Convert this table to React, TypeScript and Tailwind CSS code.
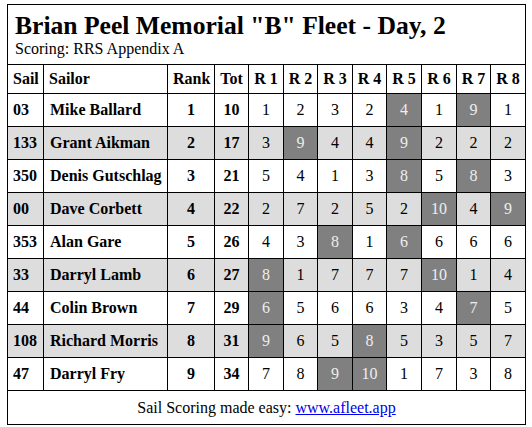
import React from "react";

type Row = {
  sail: string;
  sailor: string;
  rank: number;
  tot: number;
  races: number[];
  drops: number[];
};

const rows: Row[] = [
  { sail: "03", sailor: "Mike Ballard", rank: 1, tot: 10, races: [1, 2, 3, 2, 4, 1, 9, 1], drops: [4, 6] },
  { sail: "133", sailor: "Grant Aikman", rank: 2, tot: 17, races: [3, 9, 4, 4, 9, 2, 2, 2], drops: [1, 4] },
  { sail: "350", sailor: "Denis Gutschlag", rank: 3, tot: 21, races: [5, 4, 1, 3, 8, 5, 8, 3], drops: [4, 6] },
  { sail: "00", sailor: "Dave Corbett", rank: 4, tot: 22, races: [2, 7, 2, 5, 2, 10, 4, 9], drops: [5, 7] },
  { sail: "353", sailor: "Alan Gare", rank: 5, tot: 26, races: [4, 3, 8, 1, 6, 6, 6, 6], drops: [2, 4] },
  { sail: "33", sailor: "Darryl Lamb", rank: 6, tot: 27, races: [8, 1, 7, 7, 7, 10, 1, 4], drops: [0, 5] },
  { sail: "44", sailor: "Colin Brown", rank: 7, tot: 29, races: [6, 5, 6, 6, 3, 4, 7, 5], drops: [0, 6] },
  { sail: "108", sailor: "Richard Morris", rank: 8, tot: 31, races: [9, 6, 5, 8, 5, 3, 5, 7], drops: [0, 3] },
  { sail: "47", sailor: "Darryl Fry", rank: 9, tot: 34, races: [7, 8, 9, 10, 1, 7, 3, 8], drops: [2, 3] },
];

const raceHeads = ["R 1", "R 2", "R 3", "R 4", "R 5", "R 6", "R 7", "R 8"];
const raceWidths = [35, 34, 35, 34, 35, 35, 34, 35];

export default function App() {
  return (
    <div className="bg-white pl-[7px] pt-[4px] font-['Liberation_Serif',serif] text-[16px] text-black">
      <table className="w-[519px] table-fixed border-collapse border border-black">
        <colgroup>
          <col className="w-[36px]" />
          <col className="w-[124px]" />
          <col className="w-[47px]" />
          <col className="w-[34px]" />
          {raceWidths.map((w, i) => (
            <col key={i} style={{ width: w }} />
          ))}
        </colgroup>
        <thead>
          <tr>
            <th colSpan={12} className="h-[60px] border border-black px-[7px] text-left align-top font-normal">
              <div className="pt-[7px] text-[25.6px] font-bold leading-[28px]">
                Brian Peel Memorial "B" Fleet - Day, 2
              </div>
              <div className="text-[16px] leading-[18px]">Scoring: RRS Appendix A</div>
            </th>
          </tr>
          <tr className="h-[29px]">
            <th className="border border-black px-[5px] text-left">Sail</th>
            <th className="border border-black px-[5px] text-left">Sailor</th>
            <th className="border border-black px-[5px] text-center">Rank</th>
            <th className="border border-black px-[5px] text-center">Tot</th>
            {raceHeads.map((h) => (
              <th key={h} className="border border-black px-0 text-center">
                {h}
              </th>
            ))}
          </tr>
        </thead>
        <tbody>
          {rows.map((r, idx) => (
            <tr key={r.sail} className={idx % 2 === 1 ? "h-[33px] bg-[#dddddd]" : "h-[33px] bg-white"}>
              <td className="border border-black px-[5px] font-bold">{r.sail}</td>
              <td className="border border-black px-[6px] font-bold whitespace-nowrap">{r.sailor}</td>
              <td className="border border-black text-center font-bold">{r.rank}</td>
              <td className="border border-black text-center font-bold">{r.tot}</td>
              {r.races.map((v, i) => (
                <td
                  key={i}
                  className={
                    r.drops.includes(i)
                      ? "border border-black bg-[#808080] text-center text-[#eeeeee]"
                      : "border border-black text-center"
                  }
                >
                  {v}
                </td>
              ))}
            </tr>
          ))}
        </tbody>
        <tfoot>
          <tr className="h-[34px] bg-white">
            <td colSpan={12} className="border border-black text-center">
              Sail Scoring made easy:{" "}
              <a href="#" className="text-[#0000ee] underline">
                www.afleet.app
              </a>
            </td>
          </tr>
        </tfoot>
      </table>
    </div>
  );
}
